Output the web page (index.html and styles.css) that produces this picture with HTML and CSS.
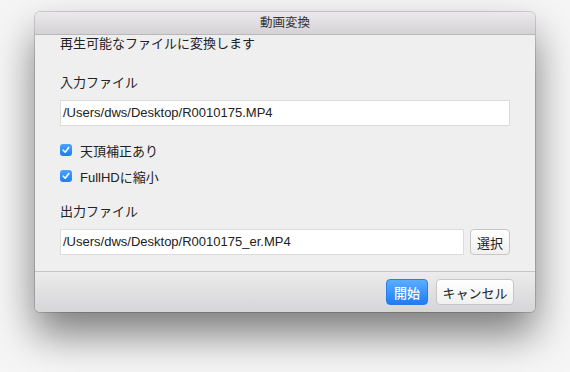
FILE: index.html
```html
<!DOCTYPE html>
<html lang="ja">

<head>
    <meta charset="UTF-8">
    <meta name="viewport" content="width=device-width, initial-scale=1.0">
    <title>動画変換</title>
    <link rel="stylesheet" href="styles.css">
</head>

<body>
    <div class="window">
        <div class="titlebar">動画変換</div>
        <div class="content">
            <p class="desc">再生可能なファイルに変換します</p>
            <p class="label">入力ファイル</p>
            <div class="field">/Users/dws/Desktop/R0010175.MP4</div>
            <label class="check first"><span class="box"><svg width="8" height="8" viewBox="0 0 8 8"><path d="M1.2 4.2 L3.2 6.2 L6.8 1.6" fill="none" stroke="#fff" stroke-width="1.6" stroke-linecap="round" stroke-linejoin="round"/></svg></span>天頂補正あり</label>
            <label class="check"><span class="box"><svg width="8" height="8" viewBox="0 0 8 8"><path d="M1.2 4.2 L3.2 6.2 L6.8 1.6" fill="none" stroke="#fff" stroke-width="1.6" stroke-linecap="round" stroke-linejoin="round"/></svg></span>FullHDに縮小</label>
            <p class="label out">出力ファイル</p>
            <div class="row">
                <div class="field grow">/Users/dws/Desktop/R0010175_er.MP4</div>
                <button class="btn">選択</button>
            </div>
        </div>
        <div class="footer">
            <button class="btn primary">開始</button>
            <button class="btn cancel">キャンセル</button>
        </div>
    </div>
</body>

</html>
```

FILE: styles.css
```css
html {
    background-color: #f6f6f6;
}

body {
    margin: 0;
    min-height: 372px;
    padding-top: 12px;
    box-sizing: border-box;
    font-family: "Liberation Sans", "Noto Sans CJK JP", sans-serif;
    font-size: 13px;
    color: #222;
}

.window {
    width: 500px;
    height: 300px;
    margin-left: 35px;
    background-color: #efefef;
    border-radius: 5px;
    box-shadow: 0 0 0 1px rgba(0, 0, 0, 0.15), 0 22px 42px rgba(0, 0, 0, 0.5);
    display: flex;
    flex-direction: column;
}

.titlebar {
    height: 22px;
    line-height: 22px;
    text-align: center;
    font-size: 12.5px;
    color: #333;
    background: linear-gradient(#ebe9eb, #d4d2d4);
    border-bottom: 1px solid #b9b7b9;
    border-radius: 5px 5px 0 0;
}

.content {
    flex: 1;
    padding: 1px 25px 0 25px;
}

.desc,
.label {
    margin: 0;
    height: 16px;
    line-height: 16px;
}

.label {
    margin-top: 23px;
}

.label.out {
    margin-top: 20px;
}

.field {
    margin-top: 9px;
    height: 24px;
    line-height: 24px;
    padding: 0 2px;
    background-color: #fff;
    border: 1px solid #dcdcdc;
    white-space: nowrap;
}

.check {
    display: flex;
    align-items: center;
    gap: 8px;
    height: 16px;
    margin-top: 10px;
}

.check.first {
    margin-top: 16px;
}

.box {
    width: 12px;
    height: 12px;
    border-radius: 3px;
    background: linear-gradient(#4aa3ff, #1f7cf2);
    display: flex;
    align-items: center;
    justify-content: center;
}

.row {
    display: flex;
    gap: 6px;
    margin-top: 9px;
}

.row .field {
    margin-top: 0;
}

.grow {
    flex: 1;
}

.btn {
    height: 26px;
    padding: 0 6px;
    font-family: inherit;
    font-size: 13px;
    color: #222;
    white-space: nowrap;
    background: linear-gradient(#ffffff, #f0f0f0);
    border: 1px solid #c6c6c6;
    border-radius: 4px;
}

.footer {
    height: 41px;
    border-top: 1px solid #c4c3c5;
    border-radius: 0 0 5px 5px;
    background: linear-gradient(#ececec, #d6d5d7);
    display: flex;
    justify-content: flex-end;
    align-items: flex-start;
    gap: 8px;
    padding: 7px 21px 0 0;
    box-sizing: border-box;
}

.btn.primary {
    width: 42px;
    color: #fff;
    font-weight: 500;
    border-color: #2a7de8;
    background: linear-gradient(#5aaeff, #1f7cf4);
}

.btn.cancel {
    width: 78px;
    padding: 0;
}
```
